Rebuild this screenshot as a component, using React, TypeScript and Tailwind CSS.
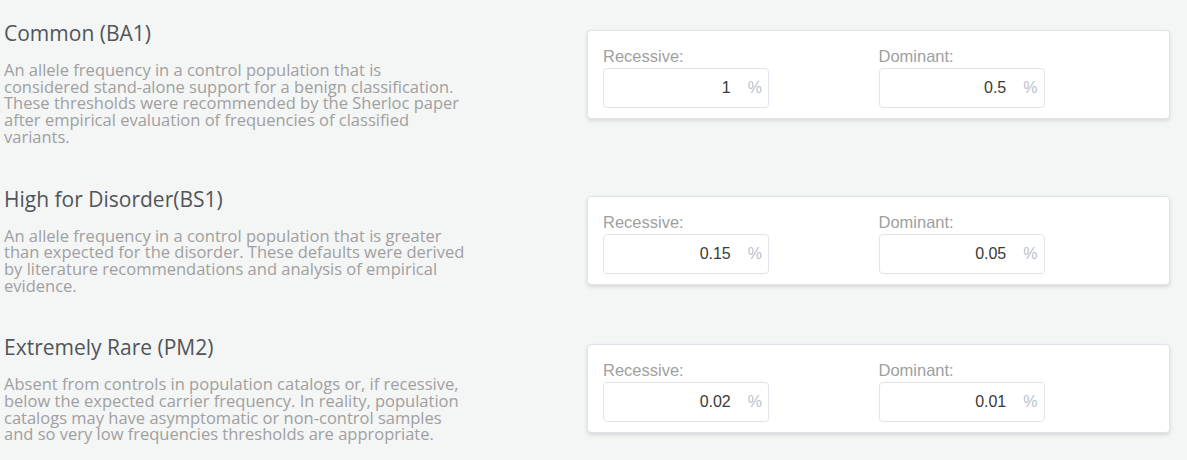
import React from 'react';

interface Criterion {
  title: string;
  description: string;
  recessive: string;
  dominant: string;
}

const criteria: Criterion[] = [
  {
    title: 'Common (BA1)',
    description:
      'An allele frequency in a control population that is considered stand-alone support for a benign classification. These thresholds were recommended by the Sherloc paper after empirical evaluation of frequencies of classified variants.',
    recessive: '1',
    dominant: '0.5',
  },
  {
    title: 'High for Disorder(BS1)',
    description:
      'An allele frequency in a control population that is greater than expected for the disorder. These defaults were derived by literature recommendations and analysis of empirical evidence.',
    recessive: '0.15',
    dominant: '0.05',
  },
  {
    title: 'Extremely Rare (PM2)',
    description:
      'Absent from controls in population catalogs or, if recessive, below the expected carrier frequency. In reality, population catalogs may have asymptomatic or non-control samples and so very low frequencies thresholds are appropriate.',
    recessive: '0.02',
    dominant: '0.01',
  },
];

function PercentField({ label, value }: { label: string; value: string }) {
  return (
    <div className="w-[276px]">
      <p className="h-[20px] leading-[20px] text-[16.5px] text-[#a0a0a0] mb-[2px]">{label}</p>
      <div className="w-[166px] h-[40px] border border-[#dfe3ea] rounded-[4px] bg-white flex items-center justify-end pr-[6px]">
        <span className="text-[16px] text-[#3a3a3a]">{value}</span>
        <span className="text-[16px] text-[#b9c1cc] ml-[17px]">%</span>
      </div>
    </div>
  );
}

export default function App() {
  return (
    <div
      className="w-[1187px] h-[460px] overflow-hidden bg-[#f4f5f5] pt-[19px] pl-[4px]"
      style={{ fontFamily: '"Liberation Sans", Arial, sans-serif' }}
    >
      {criteria.map((c) => (
        <div key={c.title} className="flex mb-[39px]">
          <div className="w-[463px]" style={{ fontFamily: '"Open Sans", sans-serif' }}>
            <h2 className="text-[21px] leading-[28px] text-[#50555a]">{c.title}</h2>
            <p className="mt-[15px] text-[16.5px] leading-[16.7px] text-[#a0a0a0]">{c.description}</p>
          </div>
          <div className="ml-[120px] mt-[11px] w-[583px] h-[89px] self-start bg-white border border-[#dfe4ea] rounded-[4px] shadow-[0_2px_4px_rgba(0,0,0,0.12)] pt-[15px] px-[15px] flex">
            <PercentField label="Recessive:" value={c.recessive} />
            <PercentField label="Dominant:" value={c.dominant} />
          </div>
        </div>
      ))}
    </div>
  );
}
